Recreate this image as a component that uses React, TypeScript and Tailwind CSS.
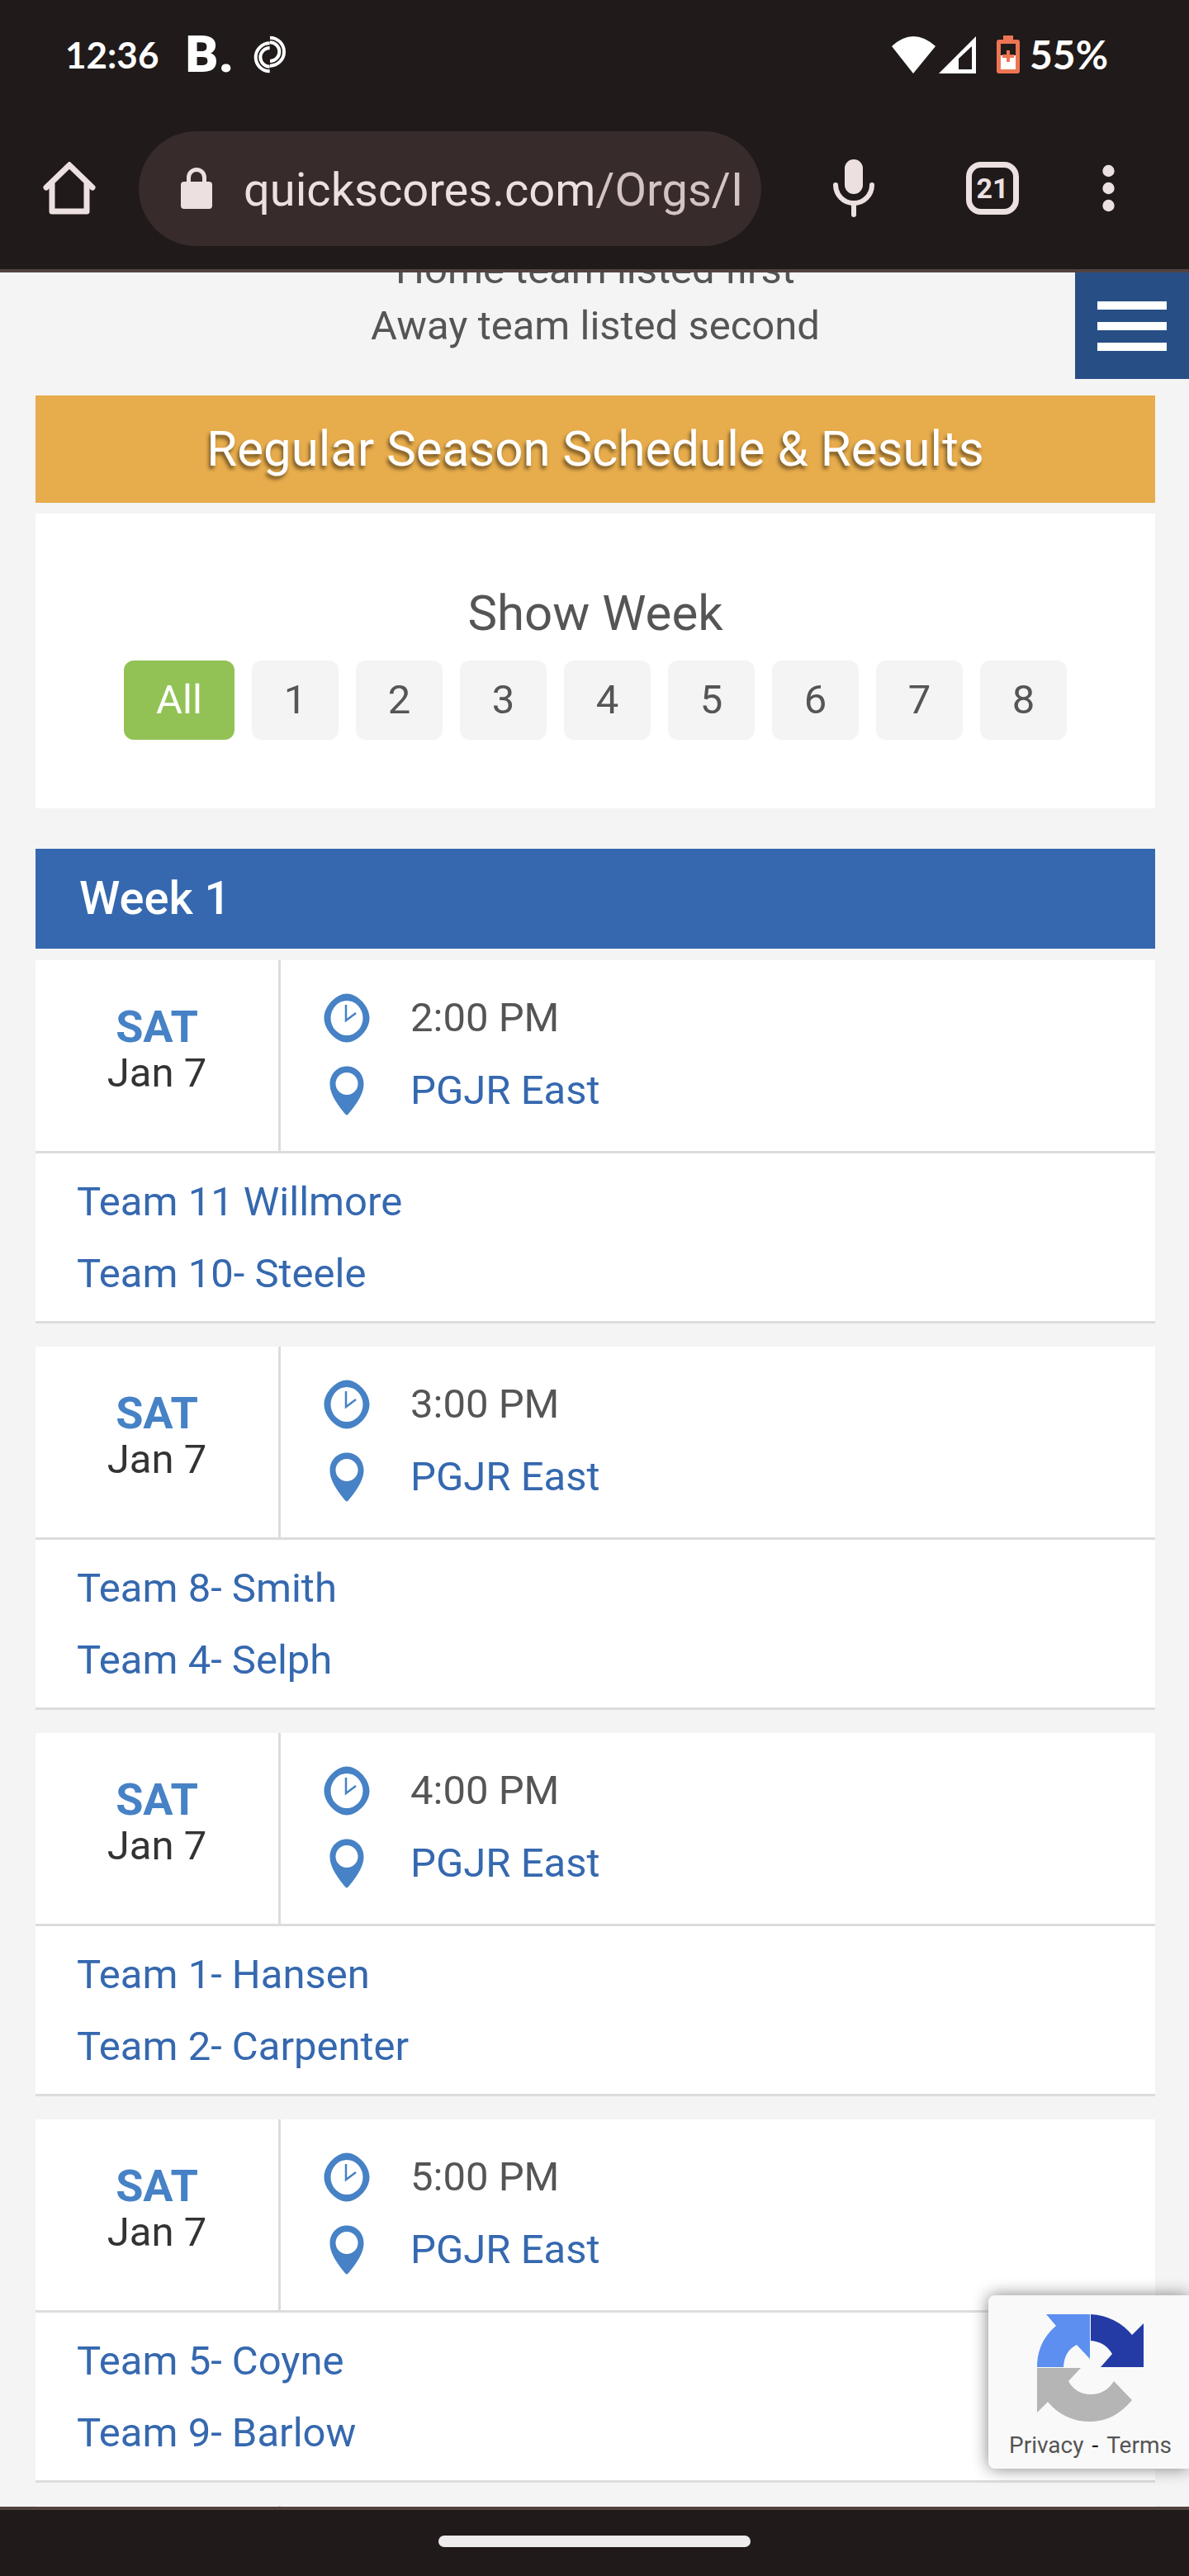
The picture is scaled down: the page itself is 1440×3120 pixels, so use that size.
import React, { useState } from 'react'

interface Game {
  id: number
  day: string
  date: string
  time: string
  location: string
  teams: string[]
}

const WEEKS = ['1', '2', '3', '4', '5', '6', '7', '8']

const GAMES: Game[] = [
  { id: 1, day: 'SAT', date: 'Jan 7', time: '2:00 PM', location: 'PGJR East', teams: ['Team 11 Willmore', 'Team 10- Steele'] },
  { id: 2, day: 'SAT', date: 'Jan 7', time: '3:00 PM', location: 'PGJR East', teams: ['Team 8- Smith', 'Team 4- Selph'] },
  { id: 3, day: 'SAT', date: 'Jan 7', time: '4:00 PM', location: 'PGJR East', teams: ['Team 1- Hansen', 'Team 2- Carpenter'] },
  { id: 4, day: 'SAT', date: 'Jan 7', time: '5:00 PM', location: 'PGJR East', teams: ['Team 5- Coyne', 'Team 9- Barlow'] },
]

const StatusBar: React.FC = () => (
  <div className="flex h-[132px] items-center justify-between pl-[79px] pr-[98px] font-['Lato',sans-serif] font-bold text-white">
    <div className="flex items-center">
      <span className="text-[44px]">12:36</span>
      <span className="ml-8 font-['Roboto',sans-serif] text-[62px] font-black leading-none">B.</span>
      <svg className="ml-6 h-12 w-10" viewBox="40 30 120 144" fill="none" stroke="#fff" strokeWidth="12" aria-hidden="true">
        <path d="M99 163 A51 51 0 0 1 99 61" />
        <path d="M99 146 A34 34 0 0 1 99 78" />
        <path d="M100 41 A51 51 0 0 1 100 143" />
        <path d="M100 58 A34 34 0 0 1 100 126" />
      </svg>
    </div>
    <div className="flex items-center">
      <svg className="h-[46px] w-[104px]" viewBox="0 0 104 46" fill="#fff" aria-hidden="true">
        <path d="M1 13 Q27 -11 54 13 L27 46 Z" />
        <path fillRule="evenodd" d="M103 1 V46 H58 Z M98 13 L82 28 V41 H98 Z" />
      </svg>
      <svg className="ml-6 h-[46px] w-7" viewBox="0 0 28 46" aria-hidden="true">
        <path d="M8 0 H20 V5 H25 Q28 5 28 8 V43 Q28 46 25 46 H3 Q0 46 0 43 V8 Q0 5 3 5 H8 Z" fill="#ee7553" />
        <path d="M5 10 H23 V24 H5 Z" fill="#211b1b" />
        <path d="M5 24 H23 V41 H5 Z" fill="#fff" />
        <path d="M12 18 H16 V23 H21 V27 H16 V32 H12 V27 H7 V23 H12 Z" fill="#ee7553" />
      </svg>
      <span className="ml-3 text-[48px]">55%</span>
    </div>
  </div>
)

const BrowserBar: React.FC = () => (
  <div className="flex h-[194px] items-center pb-[2px] pl-[52px] pr-[90px]">
    <button aria-label="Home" className="shrink-0">
      <svg className="h-16 w-16" viewBox="0 0 64 64" fill="none" stroke="#ece0e0" strokeWidth="7" strokeLinecap="round" strokeLinejoin="round" aria-hidden="true">
        <path d="M4 31 L32 4 L60 31" strokeLinejoin="miter" />
        <path d="M11 27 V60 H53 V27" />
      </svg>
    </button>
    <div className="ml-[52px] flex h-[139px] min-w-0 flex-1 items-center rounded-full bg-[#372b2b] pl-[51px]">
      <svg className="mr-[38px] h-[50px] w-[38px] shrink-0" viewBox="0 0 38 50" aria-hidden="true">
        <rect x="0" y="17" width="38" height="33" rx="4" fill="#ece0e0" />
        <path d="M9.500 18 V12 A9.500 9.500 0 0 1 28.500 12 V18" fill="none" stroke="#ece0e0" strokeWidth="5" />
      </svg>
      <div className="overflow-hidden whitespace-nowrap pt-1 text-[56px] leading-[72px] text-[#ece0e0]">
        quickscores.com<span className="text-[#d3c3c3]">/Orgs/I</span>
      </div>
    </div>
    <button aria-label="Voice search" className="ml-[86px] shrink-0">
      <svg className="h-[70px] w-[52px]" viewBox="0 0 52 70" aria-hidden="true">
        <rect x="15" y="0" width="22" height="42" rx="11" fill="#ece0e0" />
        <path d="M4 31 A22 22 0 0 0 48 31 M26 53 V67" fill="none" stroke="#ece0e0" strokeWidth="6" strokeLinecap="round" />
      </svg>
    </button>
    <button aria-label="Open tabs" className="ml-[110px] flex h-16 w-16 shrink-0 items-center justify-center rounded-[18px] border-[7px] border-[#ece0e0] text-[34px] font-bold leading-none text-[#ece0e0]">
      21
    </button>
    <button aria-label="More options" className="ml-[101px] shrink-0">
      <svg className="h-[58px] w-[15px]" viewBox="0 0 15 58" fill="#ece0e0" aria-hidden="true">
        <circle cx="7.500" cy="8" r="7.200" />
        <circle cx="7.500" cy="29" r="7.200" />
        <circle cx="7.500" cy="50" r="7.200" />
      </svg>
    </button>
  </div>
)

const ClockIcon: React.FC = () => (
  <svg className="h-[60px] w-[56px]" viewBox="0 0 56 60" fill="none" stroke="#4682c5" aria-hidden="true">
    <path fill="#4682c5" fillRule="evenodd" stroke="none" d="M28 0.500 C39 0.500 55.500 14 55.500 30 C55.500 46 39 59.500 28 59.500 C17 59.500 0.500 46 0.500 30 C0.500 14 17 0.500 28 0.500 Z M28 9 A19.500 21 0 1 0 28 51 A19.500 21 0 1 0 28 9 Z" />
    <path d="M27 14 V33 L39 24" strokeWidth="2.500" />
  </svg>
)

const PinIcon: React.FC = () => (
  <svg className="h-[60px] w-[42px]" viewBox="0 0 42 60" aria-hidden="true">
    <path fill="#4682c5" fillRule="evenodd" d="M21 0.500 C32 0.500 41.500 9 41.500 22 C41.500 37 27 53 22.500 58.800 Q21 60.300 19.500 58.800 C15 53 0.500 37 0.500 22 C0.500 9 10 0.500 21 0.500 Z M21 8 A13.500 13.500 0 1 0 21 35 A13.500 13.500 0 1 0 21 8 Z" />
  </svg>
)

const GameCard: React.FC<{ game: Game }> = ({ game }) => (
  <article className="mb-7 bg-white">
    <div className="flex border-b-[3px] border-[#dcdcdc]">
      <div className="w-[297px] shrink-0 border-r-[3px] border-[#dcdcdc] pt-[53px] text-center leading-[56px]">
        <p className="text-[54px] font-bold text-[#4682c5]">{game.day}</p>
        <p className="text-[49px] text-[#333]">{game.date}</p>
      </div>
      <div className="flex-1 pb-[29px] pl-[51px] pt-[26px] text-[49px] leading-[88px]">
        <div className="flex items-center">
          <span className="mr-12 flex w-[58px] justify-center"><ClockIcon /></span>
          <span className="text-[#555]">{game.time}</span>
        </div>
        <div className="flex items-center">
          <span className="mr-12 flex w-[58px] justify-center"><PinIcon /></span>
          <a href="#location" className="text-[#3568af]">{game.location}</a>
        </div>
      </div>
    </div>
    <ul className="border-b-[3px] border-[#dcdcdc] pb-[14px] pl-[50px] pt-[15px] text-[49px] leading-[87px]">
      {game.teams.map(team => (
        <li key={team}>
          <a href="#team" className="text-[#3568af]">{team}</a>
        </li>
      ))}
    </ul>
  </article>
)

const RecaptchaBadge: React.FC = () => (
  <div className="absolute bottom-[46px] right-0 flex h-[210px] w-[243px] flex-col items-center rounded-l-lg bg-[#f9f9f9] pl-1 pt-[22px] shadow-[0_0_20px_#808080]">
    <svg className="h-[132px] w-[132px] shrink-0" viewBox="0 0 132 132" aria-hidden="true">
      <path fill="#5c8ff0" d="M65 1 V55 L49 38 Q34 45 33 65 H1 Q1 34 24 15 L12 1 Z" />
      <path fill="#243ba6" d="M66 1 Q97 3 116 26 L130 12 V65 H78 L92 49 Q83 34 66 33 Z" />
      <path fill="#b5b5b5" d="M1 66 H54 L39 82 Q48 98 66 98 Q84 98 94 82 L116 105 Q94 131 66 131 Q34 131 14 107 L1 120 Z" />
    </svg>
    <p className="mt-3 flex gap-[10px] whitespace-nowrap text-[28px] leading-[32px] text-black">
      <a href="#privacy" className="text-[#555]">Privacy</a>
      <span>-</span>
      <a href="#terms" className="text-[#555]">Terms</a>
    </p>
  </div>
)

export default function App() {
  const [week, setWeek] = useState('All')

  return (
    <div className="flex h-screen flex-col overflow-hidden bg-[#f4f4f4] font-['Roboto',sans-serif]">
      <header className="shrink-0 border-b-4 border-[#51423f] bg-[#201a1a]">
        <StatusBar />
        <BrowserBar />
      </header>

      <div className="relative min-h-0 flex-1">
        <main className="h-full overflow-hidden pl-[43px] pr-[41px]">
          {/* intro is scrolled partly under the browser bar */}
          <div className="-mt-[37px] mb-[50px] text-center text-[49px] leading-[68px] text-[#555]">
            <p>Home team listed first</p>
            <p>Away team listed second</p>
          </div>

          <h1 className="bg-[#e7ac4b] text-center text-[60px] leading-[130px] text-white [text-shadow:-2px_4px_4px_rgba(0,0,0,0.5)]">
            Regular Season Schedule &amp; Results
          </h1>

          <section className="mt-[13px] bg-white pb-[83px] pt-[81px] text-[#555]">
            <h2 className="text-center text-[60px] leading-[80px]">Show Week</h2>
            <div className="mt-[17px] flex justify-center gap-[21px] text-[49px]">
              <button
                onClick={() => setWeek('All')}
                className={`h-24 w-[134px] rounded-xl ${week === 'All' ? 'bg-[#92c255] text-white' : 'bg-[#f4f4f4]'}`}
              >
                All
              </button>
              {WEEKS.map(w => (
                <button
                  key={w}
                  onClick={() => setWeek(w)}
                  className={`h-24 w-[105px] rounded-xl ${week === w ? 'bg-[#92c255] text-white' : 'bg-[#f4f4f4]'}`}
                >
                  {w}
                </button>
              ))}
            </div>
          </section>

          <h2 className="mb-[14px] mt-[49px] bg-[#3568af] pl-[53px] text-[56px] font-medium leading-[121px] text-white">
            Week 1
          </h2>

          {GAMES.map(game => (
            <GameCard key={game.id} game={game} />
          ))}

          {/* top edge of the next card */}
          <div className="h-24 bg-white">
            <div className="h-full w-[297px] border-r-[3px] border-[#dcdcdc]" />
          </div>
        </main>

        <button aria-label="Menu" className="absolute right-0 top-0 flex h-[129px] w-[138px] flex-col items-center justify-center gap-[15px] bg-[#274f86]">
          <span className="h-[10px] w-[84px] bg-white" />
          <span className="h-[10px] w-[84px] bg-white" />
          <span className="h-[10px] w-[84px] bg-white" />
        </button>

        <RecaptchaBadge />
      </div>

      <footer className="flex h-[84px] shrink-0 justify-center border-t-4 border-[#51423f] bg-[#201a1a] pt-[31px]">
        <div className="h-[14px] w-[378px] rounded-full bg-[#edebeb]" />
      </footer>
    </div>
  )
}
